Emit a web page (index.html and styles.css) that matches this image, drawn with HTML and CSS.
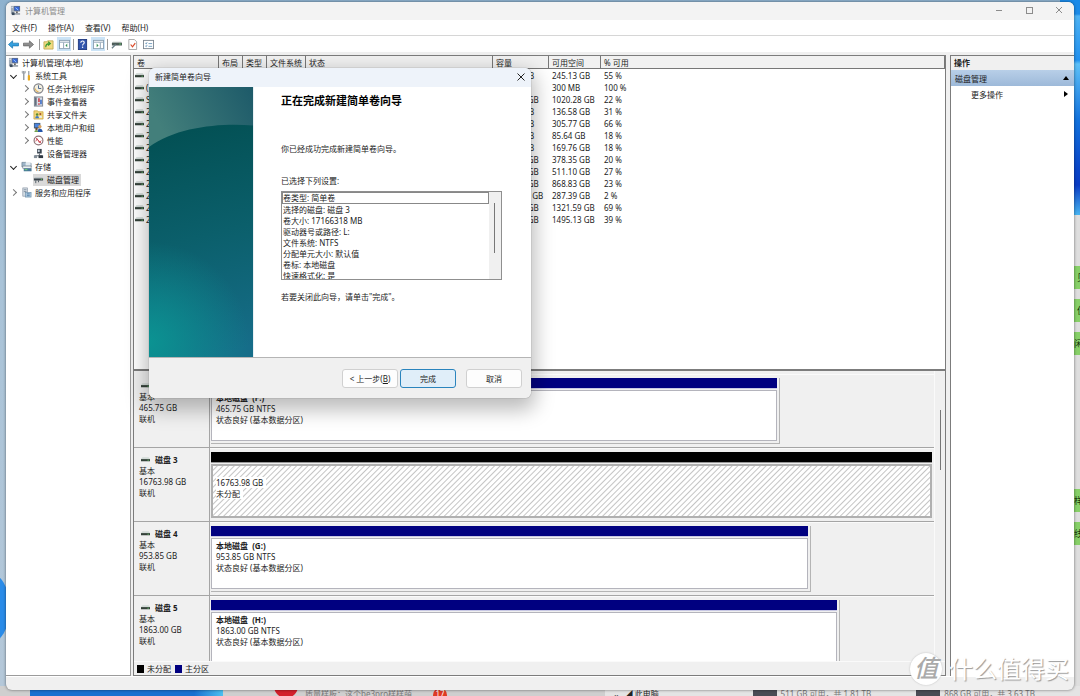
FILE: index.html
```html
<!DOCTYPE html>
<html lang="zh-CN">
<head>
<meta charset="utf-8">
<title>计算机管理</title>
<link rel="stylesheet" href="styles.css">
</head>
<body>
<svg class="defs" aria-hidden="true">
  <symbol id="i-pc" viewBox="0 0 12 12"><rect x="1" y="1" width="3" height="9" fill="#a3adb8"/><rect x="1.6" y="2" width="1.8" height="1" fill="#e8edf2"/><rect x="4" y="1" width="7" height="6" fill="#66727f"/><rect x="4.8" y="1.8" width="5.4" height="4.2" fill="#3565d6"/><path d="M6 3l3 2.500" stroke="#9fd0ff" stroke-width="1"/><rect x="6.500" y="7" width="2" height="2" fill="#666"/><rect x="4" y="9" width="7" height="1.500" fill="#848f9a"/><rect x="2" y="8" width="3" height="3" fill="#3d4d5e"/></symbol>
  <symbol id="i-tools" viewBox="0 0 12 12"><path d="M3 1v3M3 4v7" stroke="#9aa0a6" stroke-width="1.6"/><path d="M1.4 1v2.4h3.2V1" stroke="#9aa0a6" fill="none"/><path d="M8.5 1v5" stroke="#8a9096" stroke-width="1.2"/><rect x="7.4" y="5.5" width="2.4" height="6" rx="1" fill="#e9a91e"/></symbol>
  <symbol id="i-clock" viewBox="0 0 12 12"><circle cx="6" cy="6" r="5" fill="#f3efe0" stroke="#7d7f86" stroke-width="1.3"/><path d="M6 2.5V6h3" stroke="#45618f" fill="none"/><path d="M2.5 6a3.5 3.5 0 0 0 3.5 3.5" stroke="#dfa63a" fill="none"/></symbol>
  <symbol id="i-event" viewBox="0 0 12 12"><rect x="1.5" y="1" width="9" height="10" fill="#d9dee6" stroke="#7a828e"/><rect x="2" y="1.5" width="2" height="9" fill="#64707f"/><path d="M6.5 2.5v4" stroke="#c6323a" stroke-width="1.6"/><path d="M8.7 4v5" stroke="#2d62c4" stroke-width="1.6"/><rect x="5.7" y="8" width="1.6" height="1.6" fill="#c6323a"/></symbol>
  <symbol id="i-share" viewBox="0 0 12 12"><path d="M1 2h4l1 1h5v8H1z" fill="#f0d67a" stroke="#c69a2e" stroke-width=".7"/><circle cx="4.5" cy="6" r="1.4" fill="#5b8a35"/><path d="M2.5 10c0-3 4-3 4 0z" fill="#3d79c8"/><circle cx="8" cy="5.5" r="1.2" fill="#a9572d"/><path d="M6.5 9.5c0-3 3.5-3 3.5 0z" fill="#e9eef5"/></symbol>
  <symbol id="i-users" viewBox="0 0 12 12"><rect x="1" y="1" width="7" height="6" fill="#43586e"/><rect x="1.8" y="1.8" width="5.4" height="4" fill="#4b83dc"/><circle cx="7.5" cy="5" r="1.8" fill="#d9a260"/><path d="M4.6 11c0-5 6-5 6 0z" fill="#2455a9"/><circle cx="3.8" cy="7.5" r="1.3" fill="#70492c"/><path d="M1.5 11c0-3 4-3 4 0z" fill="#72a04b"/></symbol>
  <symbol id="i-perf" viewBox="0 0 12 12"><circle cx="6" cy="6" r="4.8" fill="#fff" stroke="#8f7478" stroke-width="1.3"/><path d="M3 7l1.500-3L7 8.5 9 6M3.2 3.2l5.6 5.6" stroke="#c8404b" fill="none" stroke-width=".9"/></symbol>
  <symbol id="i-device" viewBox="0 0 12 12"><rect x="4.5" y="1" width="5" height="5" fill="#38434e"/><rect x="5.3" y="1.8" width="2" height="2.6" fill="#c4ced8"/><path d="M7 6v2M2 8.5h8" stroke="#59636e"/><rect x="1" y="8" width="3.5" height="3" fill="#848e98"/><rect x="6" y="8" width="5" height="3" fill="#303a44"/></symbol>
  <symbol id="i-storage" viewBox="0 0 12 12"><path d="M1 1.5h4l1 1h5v4H1z" fill="#9eb6c9" stroke="#62798c" stroke-width=".7"/><rect x="5" y="2" width="5.5" height="3" fill="#e2eaf0"/><rect x="2" y="5.5" width="9" height="2.6" fill="#eef2f4" stroke="#68747e" stroke-width=".6"/><rect x="3" y="8" width="8.5" height="3.2" fill="#47789a"/><rect x="4" y="9" width="3" height="1" fill="#7de36b"/></symbol>
  <symbol id="i-diskmgr" viewBox="0 0 12 12"><path d="M1 4.5h10V7H1z" fill="#39424a"/><path d="M2 3.5h8l1 1H1z" fill="#b9c1c6"/><path d="M3 7v3M6 7v2" stroke="#4e5a62"/><rect x="8.5" y="5.2" width="1.5" height="1" fill="#72d85c"/></symbol>
  <symbol id="i-services" viewBox="0 0 12 12"><rect x="2" y="1" width="5" height="9" fill="#d5dde4" stroke="#8390a0" stroke-width=".7"/><path d="M3 3h3M3 5h3" stroke="#6c7b8d" stroke-width=".8"/><rect x="5" y="6" width="6" height="5" fill="#a9c6dd" stroke="#6d8fab" stroke-width=".7"/><path d="M6.5 7.5h3M6.5 9.5h3" stroke="#3c6c98" stroke-width=".8"/></symbol>
  <symbol id="i-disk" viewBox="0 0 10 6"><path d="M1.500 0h7L10 2H0z" fill="#d3dbd8"/><rect y="2" width="10" height="2.400" fill="#344139"/><rect x="7.200" y="2.700" width="1.600" height="1" fill="#63c368"/></symbol>
</svg>

<main class="desktop">
  <div class="wall wall-left"></div>
  <div class="wall wall-right"></div>
  <aside class="chat">
    <span class="bubble">见</span><span class="bubble">但</span><span class="bubble near">闲</span>
    <span class="bubble bubble-gap near">样</span><span class="bubble near">线</span>
  </aside>
  <footer class="behind">
    <div class="behind-wall"></div>
    <div class="behind-chat"><span class="avatar"></span><span>质量样板：这个be3pro样样萌</span><span class="count">17</span></div>
    <div class="behind-nav">⌄&nbsp; ◢ 此电脑</div>
    <div class="behind-drive"><i></i>511 GB 可用，共 1.81 TB</div>
    <div class="behind-drive"><i></i>868 GB 可用，共 3.63 TB</div>
  </footer>

  <section class="window">
    <header class="titlebar">
      <svg class="icon"><use href="#i-pc"/></svg>
      <h1>计算机管理</h1>
      <button class="caption" aria-label="最小化"><svg viewBox="0 0 8 8"><path d="M1 4.500h6"/></svg></button>
      <button class="caption" aria-label="最大化"><svg viewBox="0 0 8 8"><rect x="1.500" y="1.500" width="6" height="6"/></svg></button>
      <button class="caption" aria-label="关闭"><svg viewBox="0 0 8 8"><path d="M1 1l6 6M7 1L1 7"/></svg></button>
    </header>
    <nav class="menubar">
      <button>文件(F)</button><button>操作(A)</button><button>查看(V)</button><button>帮助(H)</button>
    </nav>
    <div class="toolbar">
      <button aria-label="后退"><svg viewBox="0 0 12 12"><path d="M.5 6L5 2v2.500h6.500v3H5V10z" fill="#35a0df" stroke="#1c76ae" stroke-width=".8"/></svg></button>
      <button aria-label="前进"><svg viewBox="0 0 12 12"><path d="M11.500 6L7 2v2.500H.5v3H7V10z" fill="#8e8e8e" stroke="#666" stroke-width=".8"/></svg></button>
      <span class="sep"></span>
      <button aria-label="上移"><svg viewBox="0 0 12 12"><path d="M1 3h3l1-1h6v9H1z" fill="#f1dc83" stroke="#b99d43" stroke-width=".8"/><path d="M3 9c0-3 1-4 4-4M5.500 3L8 5 5.500 7" stroke="#3c9a31" fill="none" stroke-width="1.300"/></svg></button>
      <button class="on" aria-label="控制台树"><svg viewBox="0 0 12 12"><rect x=".5" y="1.500" width="11" height="9" fill="#fff" stroke="#8ba0b2"/><path d="M1 3.500h10M5 4v6" stroke="#8ba0b2"/><path d="M9 5v4L7 7z" fill="#3b9259"/></svg></button>
      <span class="sep"></span>
      <button aria-label="帮助"><svg viewBox="0 0 12 12"><rect x="1.500" y=".5" width="9" height="11" fill="#3155ad" stroke="#223b80"/><path d="M4.200 4c0-2.500 3.700-2.200 3.700 0 0 1.400-1.800 1.400-1.800 3" stroke="#fff" fill="none" stroke-width="1.200"/><circle cx="6.100" cy="9" r=".8" fill="#fff"/></svg></button>
      <button class="on" aria-label="操作窗格"><svg viewBox="0 0 12 12"><rect x=".5" y="1.500" width="11" height="9" fill="#fff" stroke="#8ba0b2"/><path d="M1 3.500h10M8 4v6" stroke="#8ba0b2"/><path d="M4 5v4l2-2z" fill="#3b9259"/></svg></button>
      <span class="sep"></span>
      <button aria-label="磁盘"><svg viewBox="0 0 12 12"><path d="M2 3h9l1 1H1z" fill="#b6c0bd"/><path d="M1 4h11v3H1z" fill="#4d5d59"/><path d="M1 10l4-4" stroke="#6a7f88" stroke-width="1.500"/><rect x="9" y="5" width="2" height="1" fill="#66c96a"/></svg></button>
      <button class="gap" aria-label="属性"><svg viewBox="0 0 12 12"><path d="M2 .5h6l2.500 2.500v8.500H2z" fill="#fff" stroke="#8d8d8d" stroke-width=".8"/><path d="M4 6l2 2.500L9 4.500" stroke="#dc4a28" fill="none" stroke-width="1.300"/></svg></button>
      <button class="gap" aria-label="列表"><svg viewBox="0 0 12 12"><rect x=".5" y="1.500" width="11" height="9" fill="#fff" stroke="#7c8791"/><path d="M2.500 4.500l1 1 1-2M2.500 7.500l1 1 1-2M6 5h4M6 8h4" stroke="#4b82ad" fill="none" stroke-width=".8"/></svg></button>
    </div>

    <div class="panes">
      <nav class="tree">
        <ul>
          <li class="root"><svg class="icon"><use href="#i-pc"/></svg><span>计算机管理(本地)</span></li>
          <li><button class="twisty open" aria-label="折叠"></button><svg class="icon"><use href="#i-tools"/></svg><span>系统工具</span></li>
          <li class="sub"><button class="twisty" aria-label="展开"></button><svg class="icon"><use href="#i-clock"/></svg><span>任务计划程序</span></li>
          <li class="sub"><button class="twisty" aria-label="展开"></button><svg class="icon"><use href="#i-event"/></svg><span>事件查看器</span></li>
          <li class="sub"><button class="twisty" aria-label="展开"></button><svg class="icon"><use href="#i-share"/></svg><span>共享文件夹</span></li>
          <li class="sub"><button class="twisty" aria-label="展开"></button><svg class="icon"><use href="#i-users"/></svg><span>本地用户和组</span></li>
          <li class="sub"><button class="twisty" aria-label="展开"></button><svg class="icon"><use href="#i-perf"/></svg><span>性能</span></li>
          <li class="sub leaf"><svg class="icon"><use href="#i-device"/></svg><span>设备管理器</span></li>
          <li><button class="twisty open" aria-label="折叠"></button><svg class="icon"><use href="#i-storage"/></svg><span>存储</span></li>
          <li class="sub leaf"><div class="selected"><svg class="icon"><use href="#i-diskmgr"/></svg><span>磁盘管理</span></div></li>
          <li><button class="twisty" aria-label="展开"></button><svg class="icon"><use href="#i-services"/></svg><span>服务和应用程序</span></li>
        </ul>
      </nav>

      <div class="center">
        <div class="volumes">
          <table>
            <colgroup><col class="c-vol"><col class="c-sm"><col class="c-sm"><col class="c-fs"><col class="c-state"><col class="c-cap"><col class="c-free"><col></colgroup>
            <thead><tr><th>卷</th><th>布局</th><th>类型</th><th>文件系统</th><th>状态</th><th>容量</th><th>可用空间</th><th>% 可用</th></tr></thead>
            <tbody>
              <tr><td><svg class="disk"><use href="#i-disk"/></svg></td><td></td><td></td><td></td><td></td><td>445.72 GB</td><td>245.13 GB</td><td>55 %</td></tr>
              <tr><td><svg class="disk"><use href="#i-disk"/></svg>(</td><td></td><td></td><td></td><td></td><td>300 MB</td><td>300 MB</td><td>100 %</td></tr>
              <tr><td><svg class="disk"><use href="#i-disk"/></svg>S</td><td></td><td></td><td></td><td></td><td>4657.40 GB</td><td>1020.28 GB</td><td>22 %</td></tr>
              <tr><td><svg class="disk"><use href="#i-disk"/></svg>2</td><td></td><td></td><td></td><td></td><td>440.58 GB</td><td>136.58 GB</td><td>31 %</td></tr>
              <tr><td><svg class="disk"><use href="#i-disk"/></svg>2</td><td></td><td></td><td></td><td></td><td>465.75 GB</td><td>305.77 GB</td><td>66 %</td></tr>
              <tr><td><svg class="disk"><use href="#i-disk"/></svg>2</td><td></td><td></td><td></td><td></td><td>476.94 GB</td><td>85.64 GB</td><td>18 %</td></tr>
              <tr><td><svg class="disk"><use href="#i-disk"/></svg>2</td><td></td><td></td><td></td><td></td><td>953.85 GB</td><td>169.76 GB</td><td>18 %</td></tr>
              <tr><td><svg class="disk"><use href="#i-disk"/></svg>2</td><td></td><td></td><td></td><td></td><td>1863.00 GB</td><td>378.35 GB</td><td>20 %</td></tr>
              <tr><td><svg class="disk"><use href="#i-disk"/></svg>2</td><td></td><td></td><td></td><td></td><td>1863.00 GB</td><td>511.10 GB</td><td>27 %</td></tr>
              <tr><td><svg class="disk"><use href="#i-disk"/></svg>2</td><td></td><td></td><td></td><td></td><td>3726.01 GB</td><td>868.83 GB</td><td>23 %</td></tr>
              <tr><td><svg class="disk"><use href="#i-disk"/></svg>2</td><td></td><td></td><td></td><td></td><td>14901.10 GB</td><td>287.39 GB</td><td>2 %</td></tr>
              <tr><td><svg class="disk"><use href="#i-disk"/></svg>2</td><td></td><td></td><td></td><td></td><td>1907.71 GB</td><td>1321.59 GB</td><td>69 %</td></tr>
              <tr><td><svg class="disk"><use href="#i-disk"/></svg>2</td><td></td><td></td><td></td><td></td><td>3726.01 GB</td><td>1495.13 GB</td><td>39 %</td></tr>
            </tbody>
          </table>
        </div>

        <div class="graph">
          <div class="disks">
            <article class="disk-row">
              <div class="disk-info"><h2><svg class="disk"><use href="#i-disk"/></svg>磁盘 2</h2><p>基本</p><p>465.75 GB</p><p>联机</p></div>
              <div class="track"><div class="volume" style="width:78.9%"><div class="bar"></div><div class="box"><b>本地磁盘&nbsp; (F:)</b><p>465.75 GB NTFS</p><p>状态良好 (基本数据分区)</p></div></div></div>
            </article>
            <article class="disk-row">
              <div class="disk-info"><h2><svg class="disk"><use href="#i-disk"/></svg>磁盘 3</h2><p>基本</p><p>16763.98 GB</p><p>联机</p></div>
              <div class="track"><div class="volume free" style="width:100%"><div class="bar"></div><div class="box"><b>&nbsp;</b><p>16763.98 GB</p><p>未分配</p></div></div></div>
            </article>
            <article class="disk-row">
              <div class="disk-info"><h2><svg class="disk"><use href="#i-disk"/></svg>磁盘 4</h2><p>基本</p><p>953.85 GB</p><p>联机</p></div>
              <div class="track"><div class="volume" style="width:83.2%"><div class="bar"></div><div class="box"><b>本地磁盘&nbsp; (G:)</b><p>953.85 GB NTFS</p><p>状态良好 (基本数据分区)</p></div></div></div>
            </article>
            <article class="disk-row">
              <div class="disk-info"><h2><svg class="disk"><use href="#i-disk"/></svg>磁盘 5</h2><p>基本</p><p>1863.00 GB</p><p>联机</p></div>
              <div class="track"><div class="volume" style="width:87.2%"><div class="bar"></div><div class="box"><b>本地磁盘&nbsp; (H:)</b><p>1863.00 GB NTFS</p><p>状态良好 (基本数据分区)</p></div></div></div>
            </article>
          </div>
          <div class="scroll"><div class="thumb"></div></div>
        </div>
        <div class="legend"><i class="k-free"></i>未分配<i class="k-main"></i>主分区</div>
      </div>

      <aside class="actions">
        <h2>操作</h2>
        <button class="group">磁盘管理<svg viewBox="0 0 6 6"><path d="M3 1l3 4H0z"/></svg></button>
        <button class="more">更多操作<svg viewBox="0 0 6 6"><path d="M1 0l4 3-4 3z"/></svg></button>
      </aside>
    </div>
    <div class="status"></div>
  </section>

  <section class="dialog" role="dialog" aria-labelledby="dlg-title">
    <header class="dlg-title"><span id="dlg-title">新建简单卷向导</span><button aria-label="关闭"><svg viewBox="0 0 8 8"><path d="M.5.5l7 7M7.500.5l-7 7"/></svg></button></header>
    <div class="dlg-body">
      <svg class="art" viewBox="0 0 104 270" preserveAspectRatio="none" aria-hidden="true">
        <defs>
          <linearGradient id="g1" gradientUnits="userSpaceOnUse" x1="0" y1="40" x2="60" y2="270"><stop offset="0" stop-color="#024f52"/><stop offset=".5" stop-color="#0b5f6b"/><stop offset="1" stop-color="#166d89"/></linearGradient>
          <radialGradient id="g2" gradientUnits="userSpaceOnUse" cx="0" cy="255" r="100"><stop offset="0" stop-color="#0b9392"/><stop offset="1" stop-color="#0b9392" stop-opacity="0"/></radialGradient>
          <linearGradient id="g3" x1="0" y1=".3" x2="1" y2="0"><stop offset="0" stop-color="#437f7b"/><stop offset="1" stop-color="#1d5a69"/></linearGradient>
        </defs>
        <rect width="104" height="270" fill="url(#g1)"/><rect width="104" height="270" fill="url(#g2)"/>
        <path d="M0 0h104v38.500C70 36 28 40 0 60z" fill="url(#g3)"/>
      </svg>
      <div class="dlg-content">
        <h2>正在完成新建简单卷向导</h2>
        <p class="done">你已经成功完成新建简单卷向导。</p>
        <p class="label" id="set-label">已选择下列设置:</p>
        <div class="listbox">
          <ul role="listbox" aria-labelledby="set-label">
            <li class="focus">卷类型: 简单卷</li><li>选择的磁盘: 磁盘 3</li><li>卷大小: 17166318 MB</li><li>驱动器号或路径: L:</li><li>文件系统: NTFS</li><li>分配单元大小: 默认值</li><li>卷标: 本地磁盘</li><li>快速格式化: 是</li>
          </ul>
          <div class="list-scroll"><div class="thumb"></div></div>
        </div>
        <p class="hint">若要关闭此向导，请单击"完成"。</p>
      </div>
    </div>
    <footer class="dlg-foot"><button>&lt; 上一步(<u>B</u>)</button><button class="primary">完成</button><button class="cancel">取消</button></footer>
  </section>

  <div class="watermark"><span class="seal">值</span><span>什么值得买</span></div>
</main>
</body>
</html>
```
FILE: styles.css
```css
* { box-sizing: border-box; }
body, h1, h2, p, ul { margin: 0; padding: 0; }
body, button { font: 8px/11px "Noto Sans", "Noto Sans CJK SC", sans-serif; color: #1c1c1c; }
button { border: 0; padding: 0; background: none; }
ul { list-style: none; }
h1, h2 { font-size: 8px; font-weight: 400; }
.defs { position: absolute; width: 0; height: 0; }
.icon { width: 11px; height: 11px; flex: none; }
.disk { width: 9px; height: 6px; flex: none; }

.desktop { position: relative; height: 100vh; overflow: hidden; background: linear-gradient(#8eb2cf, #a9c3d8 40%, #b5c8d9); }

/* what shows round the main window */
.wall { position: absolute; }
.wall-left { left: -34px; top: 572px; width: 44px; height: 72px; border-radius: 50%; background: #2a8be8; }
.wall-right { right: 0; top: 0; width: 20px; height: 215px; background: linear-gradient(#1a8ae8 0 14px, #4db2f4 16px, #2090ee 60px, #5cc0f8 64px, #1272dd 120px, #0a45c8 170px, #0a3cc4 185px, #48b4f0 215px); }
.chat { position: absolute; right: 0; top: 215px; bottom: 0; width: 20px; padding-top: 51px; background: #dedede; display: flex; flex-direction: column; gap: 10px; align-items: flex-end; }
.bubble { width: 20px; height: 23px; padding-left: 17px; line-height: 23px; overflow: hidden; white-space: nowrap; background: #87d068; font-size: 9px; color: #143008; }
.near { padding-left: 14px; }
.bubble-gap { margin-top: 124px; }
.behind { position: absolute; left: 0; right: 0; bottom: 0; height: 10px; display: flex; align-items: flex-start; overflow: hidden; color: #777; background: #cfcfcf; padding-left: 30px; }
.behind > div { height: 10px; white-space: nowrap; line-height: 11px; padding-top: 2px; }
.behind .behind-wall { width: 197px; background: linear-gradient(90deg, #1a70d0 85%, #4cc0f0); }
.behind-chat { display: flex; gap: 7px; padding-left: 51px; width: 389px; }
.avatar { width: 24px; height: 24px; border-radius: 50%; background: #d3202c; margin-top: -14px; }
.count { width: 14px; height: 14px; margin-left: 14px; border-radius: 50%; background: #df3b25; color: #fff; text-align: center; }
.behind-nav { width: 150px; padding-left: 8px; background: #e4e4e4; color: #222; }
.behind-drive { display: flex; gap: 4px; width: 167px; background: #e4e4e4; }
.behind-drive i { width: 24px; height: 10px; background: #4a4c55; }

.window { position: absolute; inset: 2px 6px 6px 6px; display: flex; flex-direction: column; border-radius: 6px; overflow: hidden; background: #f0f0f0; box-shadow: 0 0 3px #0008; }
.titlebar { display: flex; align-items: center; height: 18px; padding: 0 0 2px 4px; background: #f3f3f3; color: #8b8b8b; }
.titlebar h1 { flex: 1; padding-left: 4px; }
.caption { width: 30px; height: 16px; display: flex; align-items: center; justify-content: center; }
.caption svg { width: 8px; height: 8px; fill: none; stroke: #8c8c8c; stroke-width: 1; }
.menubar { display: flex; gap: 11px; height: 16px; padding-left: 6px; background: #fff; border-bottom: 1px solid #d6d6d6; }
.toolbar { display: flex; align-items: center; gap: 2px; height: 16px; padding-left: 1px; background: #fff; }
.toolbar button { width: 13px; height: 14px; display: flex; align-items: center; justify-content: center; }
.toolbar svg { width: 11px; height: 11px; }
.toolbar .on { width: 14px; background: #cce4f7; }
.toolbar .gap { margin-left: 1px; }
.sep { width: 1px; height: 11px; background: #9a9a9a; }
.sep:first-of-type { margin: 0 0 0 2px; }

.panes { flex: 1; min-height: 0; display: flex; padding-top: 3px; }
.tree { width: 125px; background: #fff; border: solid #9b9b9b; border-width: 1px 1px 1px 0; }
.tree li { display: flex; align-items: center; height: 13px; padding-left: 5px; }
.tree li > span, .selected span { padding-left: 3px; white-space: nowrap; }
.tree .root { padding-left: 2px; }
.tree .sub { padding-left: 17px; }
.tree .leaf { padding-left: 27px; }
.selected { display: flex; align-items: center; height: 12px; padding-right: 2px; background: #d9d9d9; }
.twisty { width: 5px; height: 5px; margin: 0 5px 0 0; flex: none; display: flex; }
.twisty::before { content: ""; width: 4px; height: 4px; border: solid #777; border-width: 1px 1px 0 0; transform: rotate(45deg); }
.twisty.open::before { border-color: #222; transform: rotate(135deg); }

.center { flex: 1; min-width: 0; margin: 0 4px 0 2px; display: flex; flex-direction: column; border: solid #7c7c7c; border-width: 1px; }
.volumes { flex: 1; min-height: 0; background: #fff; overflow: hidden; }
.volumes table { width: 100%; table-layout: fixed; border-collapse: separate; border-spacing: 0; }
.volumes th { height: 13px; padding: 1px 3px 0; text-align: left; font-weight: 400; background: #f1f1f1; border: solid #777; border-width: 0 1px 1px 0; white-space: nowrap; }
.volumes td { height: 12px; padding: 0 3px; line-height: 11px; white-space: nowrap; }
.volumes td .disk { margin-right: 2px; }
.volumes td:first-child { padding-left: 1px; }
.c-vol { width: 85px; } .c-sm { width: 24px; } .c-fs { width: 39px; } .c-state { width: 187px; } .c-cap { width: 56px; } .c-free { width: 52px; }

.graph { height: 292px; display: flex; border-top: 2px solid #7c7c7c; background: #f0f0f0; }
.disks { flex: 1; min-width: 0; padding-top: 3px; overflow: hidden; border-right: 1px solid #fafafa; }
.disk-row { display: flex; height: 74px; border-bottom: 1px solid #a5a5a5; }
.disk-info { width: 76px; flex: none; padding: 6px 0 0 5px; border-right: 1px solid #a5a5a5; }
.disk-info h2 { display: flex; align-items: center; gap: 5px; padding-left: 2px; font-weight: 700; line-height: 11px; }
.track { flex: 1; padding: 4px 2px 3px 1px; display: flex; background: linear-gradient(#fafafa, #fafafa) top / 100% 1px no-repeat; }
.volume { display: flex; flex-direction: column; padding-right: 2px; border: solid #b4b4b4; border-width: 0 1px 1px 0; padding-bottom: 2px; }
.bar { height: 11px; background: #000080; border-bottom: 1px solid #c8c8e4; }
.box { flex: 1; margin-top: 1px; padding: 1px 4px; background: #fff; border: 1px solid #b4b4bc; white-space: nowrap; }
.box b { display: block; }
.free { border: 0; padding: 0; }
.free .bar { background: #000; border-color: #999; }
.free .box { border: 2px solid #b0b0b0; padding: 0 3px; background: repeating-linear-gradient(135deg, #fff 0 2px, #c4c4c4 3px, #fff 4px); }
.free .box p { width: max-content; padding-right: 3px; background: #fff; }
.scroll { width: 10px; padding: 39px 0 0 5px; }
.thumb { width: 1px; background: #777; }
.scroll .thumb { height: 60px; }
.legend { display: flex; align-items: center; height: 14px; padding-left: 3px; border-top: 1px solid #fafafa; background: #f0f0f0; }
.legend i { width: 7px; height: 8px; margin-right: 3px; background: #000; }
.legend .k-main { margin-left: 4px; background: #000080; }

.actions { width: 124px; background: #fff; border: solid #7c7c7c; border-width: 1px 0 0 1px; }
.actions h2 { height: 14px; line-height: 14px; padding-left: 3px; font-weight: 700; background: #f0f0f0; }
.actions button { display: flex; align-items: center; justify-content: space-between; width: 100%; height: 16px; padding: 0 5px 0 4px; }
.actions svg { width: 6px; height: 6px; }
.actions .group { background: linear-gradient(#b8cfe8, #9db9d9); }
.actions .more { padding-left: 20px; }
.status { height: 14px; border-top: 1px solid #fff; }

.dialog { position: absolute; left: 149px; top: 68px; width: 382px; background: #fff; border-radius: 6px; overflow: hidden; box-shadow: 0 0 1px #555, 0 8px 20px 4px #0004; }
.dlg-title { display: flex; align-items: center; justify-content: space-between; height: 19px; padding: 0 6px 2px; background: #eef3fa; }
.dlg-title svg { display: block; width: 8px; height: 8px; fill: none; stroke: #222; }
.dlg-body { display: flex; height: 270px; }
.art { width: 104px; height: 270px; flex: none; }
.dlg-content { flex: 1; padding: 6px 29px 0 27px; border-left: 1px solid #e8f0f4; }
.dlg-content h2 { font-size: 11px; line-height: 16px; font-weight: 600; color: #000; }
.done { padding-top: 34px; }
.label { padding-top: 21px; }
.listbox { display: flex; height: 89px; margin-top: 5px; overflow: hidden; border: 1px solid #8f8f8f; }
.listbox ul { flex: 1; }
.listbox li { height: 11px; padding-left: 1px; line-height: 11px; }
.listbox .focus { height: 12px; padding-left: 0; border: 1px solid #888; line-height: 10px; }
.list-scroll { width: 12px; padding: 11px 0 0 5px; background: #f0f0f0; }
.list-scroll .thumb { height: 50px; }
.hint { padding-top: 11px; }
.dlg-foot { display: flex; align-items: center; justify-content: flex-end; gap: 2px; height: 41px; padding: 0 9px 0 0; background: #f0f0f0; border-top: 1px solid #b5b5b5; }
.dlg-foot button { width: 56px; height: 19px; background: #fdfdfd; border: 1px solid #d0d0d0; border-radius: 3px; }
.dlg-foot .primary { background: #e0eef9; border-color: #2a84bd; }
.dlg-foot .cancel { margin-left: 8px; }

.watermark { position: absolute; right: 11px; bottom: 10px; display: flex; align-items: center; gap: 7px; font-size: 24px; line-height: 34px; font-weight: 400; color: #fff; text-shadow: 1px 1px 1px #999; }
.seal { width: 32px; height: 32px; border-radius: 50%; background: #fff; color: #aaa; text-align: center; line-height: 30px; font-style: italic; font-weight: 500; text-shadow: none; box-shadow: 0 0 2px #bbb; }
```
